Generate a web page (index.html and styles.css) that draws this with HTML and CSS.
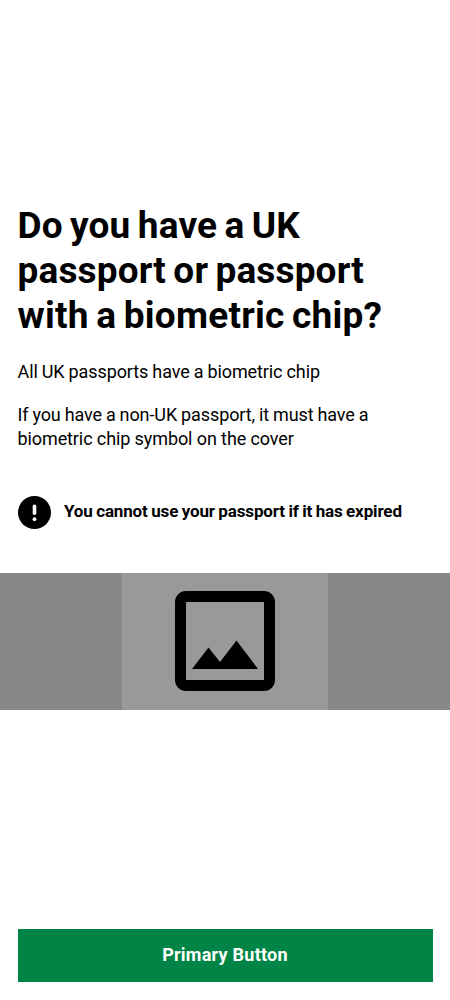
FILE: index.html
```html
<!DOCTYPE html>
<html lang="en">
<head>
<meta charset="utf-8">
<title>Passport check</title>
<link rel="stylesheet" href="styles.css">
</head>
<body>
<main class="screen">
  <section class="content">
    <h1 class="title"><span class="line l1">Do you have a UK</span><span class="line l2">passport or passport</span><span class="line l3">with a biometric chip?</span></h1>
    <p class="text"><span class="line t1">All UK passports have a biometric chip</span></p>
    <p class="text"><span class="line t2">If you have a non-UK passport, it must have a</span><span class="line t3">biometric chip symbol on the cover</span></p>
    <div class="warning">
      <svg class="warning-icon" viewBox="0 0 33 33" aria-hidden="true"><circle cx="16.5" cy="16.5" r="16.5"/><path class="mark" d="M16.5 10.300v7"/><circle class="dot" cx="16.5" cy="23.2" r="1.900"/></svg>
      <strong class="warning-text">You cannot use your passport if it has expired</strong>
    </div>
  </section>
  <div class="banner">
    <div class="picture">
      <svg class="picture-icon" viewBox="0 0 100 100" aria-hidden="true"><rect x="5.5" y="5.5" width="89" height="89" rx="5.5"/><path d="M17 78l16.500-21.500 11.500 14.500 16.500-21.500 21.500 28.500z"/></svg>
    </div>
  </div>
  <footer class="actions"><button class="primary"><span class="primary-label">Primary Button</span></button></footer>
</main>
</body>
</html>
```
FILE: styles.css
```css
* { box-sizing: border-box; }
body { margin: 0; background: #fff; color: #000; font-family: Roboto, sans-serif; }
.screen { display: flex; flex-direction: column; height: 1000px; padding-top: 203px; }
.content { padding: 0 17.5px; }
.line { display: block; width: max-content; white-space: nowrap; }
.title { margin: 0 0 22px; font-size: 37px; line-height: 45px; font-weight: 700; letter-spacing: 0.15px; word-spacing: -2px; }
.l3 { letter-spacing: 0.25px; }
.text { margin: 0 0 19px; font-size: 18px; line-height: 24px; letter-spacing: -0.1px; }
.t1 { word-spacing: -0.3px; }
.t2 { word-spacing: -0.4px; }
.warning { display: flex; align-items: center; gap: 13.5px; height: 33px; margin-top: 45px; }
.warning-icon { flex: none; width: 33px; height: 33px; }
.mark { stroke: #fff; stroke-width: 3.6; stroke-linecap: round; }
.dot { fill: #fff; }
.warning-text { padding-bottom: 3px; font-size: 17px; line-height: 24px; font-weight: 700; letter-spacing: -0.14px; word-spacing: -0.6px; white-space: nowrap; }
.banner { display: flex; justify-content: center; height: 136.5px; margin-top: 44px; background: #888; }
.picture { display: flex; align-items: center; justify-content: center; width: 206px; background: #999; }
.picture-icon { width: 100px; height: 100px; }
.picture-icon rect { fill: none; stroke: #000; stroke-width: 11; }
.actions { margin-top: auto; padding: 0 17.5px 18px; }
.primary { display: flex; align-items: center; justify-content: center; width: 100%; height: 53.5px; padding: 0; border: 0; background: #008547; color: #fff; font: 700 18px/24px Roboto, sans-serif; letter-spacing: 0.25px; }
```
